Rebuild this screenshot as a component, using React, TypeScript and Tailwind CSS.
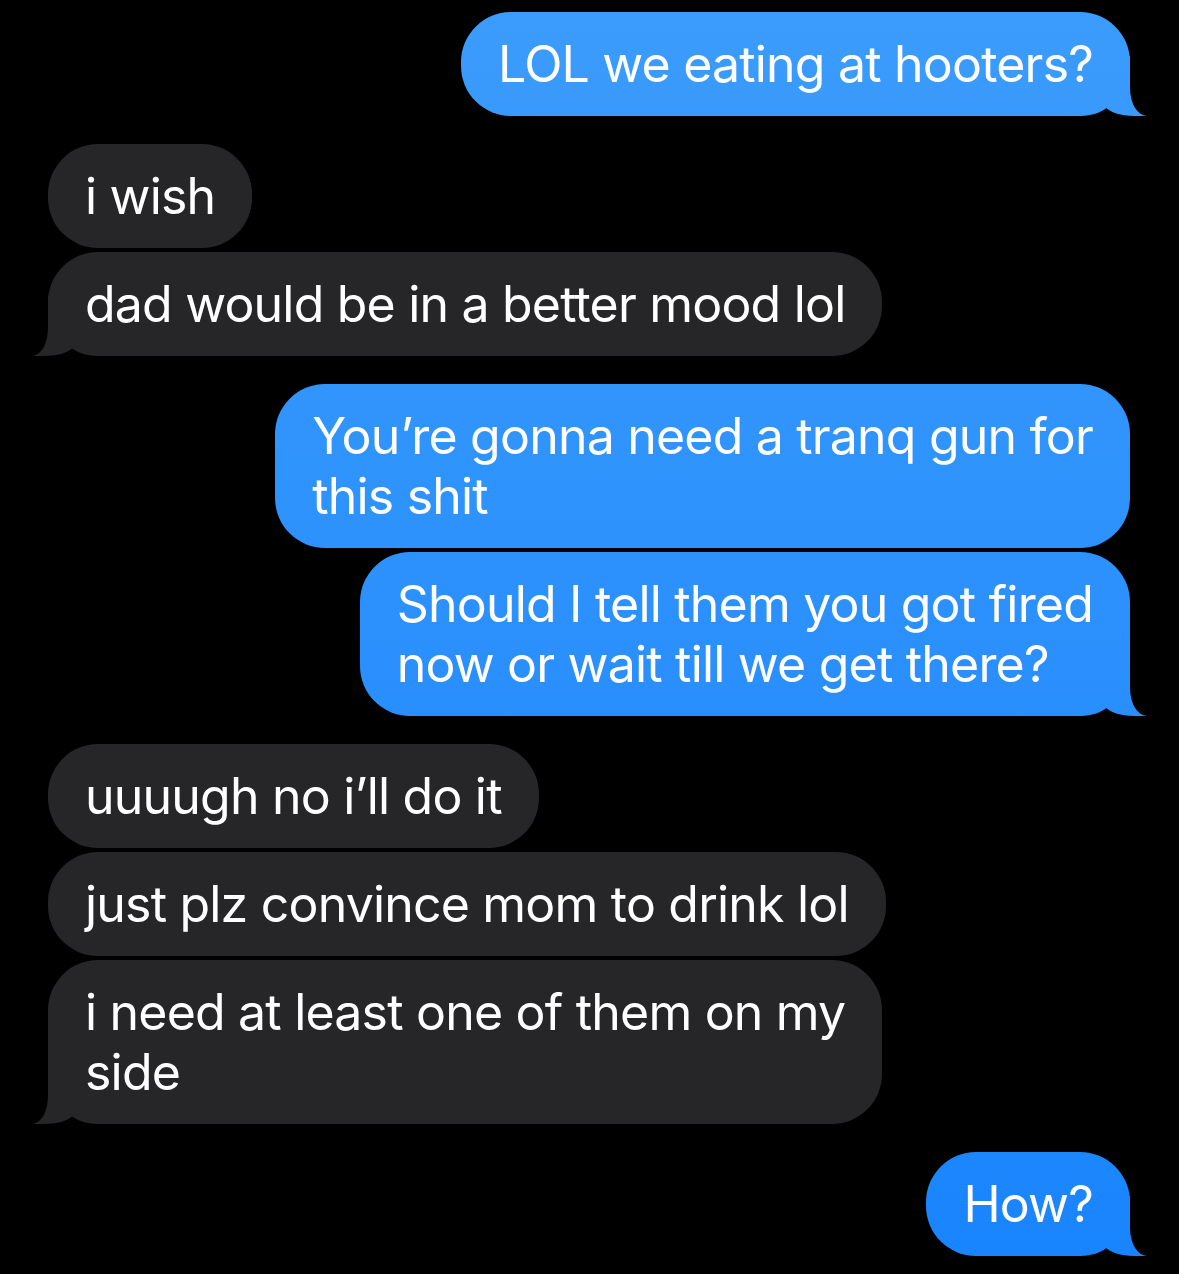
import React from "react";

type Msg = { lines: string[]; tail?: boolean };
type Group = { me: boolean; msgs: Msg[] };

const groups: Group[] = [
  { me: true, msgs: [{ lines: ["LOL we eating at hooters?"], tail: true }] },
  {
    me: false,
    msgs: [
      { lines: ["i wish"] },
      { lines: ["dad would be in a better mood lol"], tail: true },
    ],
  },
  {
    me: true,
    msgs: [
      { lines: ["You\u2019re gonna need a tranq gun for", "this shit"] },
      { lines: ["Should I tell them you got fired", "now or wait till we get there?"], tail: true },
    ],
  },
  {
    me: false,
    msgs: [
      { lines: ["uuuugh no i\u2019ll do it"] },
      { lines: ["just plz convince mom to drink lol"] },
      { lines: ["i need at least one of them on my", "side"], tail: true },
    ],
  },
  { me: true, msgs: [{ lines: ["How?"], tail: true }] },
];

// fixed gradient so every blue bubble picks up its slice of the screen
const blue = "bg-fixed bg-linear-to-b from-[#3b9cfc] to-[#1884fd]";

const Bubble = ({ me, msg }: { me: boolean; msg: Msg }) => {
  return (
    <div
      className={`relative rounded-[50px] px-[37px] py-[22px] text-[50px] leading-[60px] tracking-[-0.8px] text-white whitespace-nowrap ${
        me ? `self-end ${blue}` : "self-start bg-[#262629]"
      }`}
    >
      {msg.lines.map((l, i) => (
        <div key={i} className="relative z-10">
          {l}
        </div>
      ))}
      {msg.tail && me && (
        <>
          <div className={`absolute bottom-0 right-[-17px] w-[44px] h-[60px] rounded-bl-[32px_14px] ${blue}`} />
          <div className="absolute bottom-0 right-[-40px] w-[40px] h-[60px] bg-black rounded-bl-[17px_28px]" />
        </>
      )}
      {msg.tail && !me && (
        <>
          <div className="absolute bottom-0 left-[-16px] w-[44px] h-[60px] rounded-br-[32px_14px] bg-[#262629]" />
          <div className="absolute bottom-0 left-[-40px] w-[40px] h-[60px] bg-black rounded-br-[16px_28px]" />
        </>
      )}
    </div>
  );
};

export default function App() {
  return (
    <div
      className="min-h-screen bg-black pt-[12px] pb-[19px] pl-[48px] pr-[49px] flex flex-col gap-[28px]"
      style={{ fontFamily: "Inter, 'Noto Sans', sans-serif" }}
    >
      {groups.map((g, gi) => (
        <div key={gi} className="flex flex-col gap-[4px]">
          {g.msgs.map((m, mi) => (
            <Bubble key={mi} me={g.me} msg={m} />
          ))}
        </div>
      ))}
    </div>
  );
}
